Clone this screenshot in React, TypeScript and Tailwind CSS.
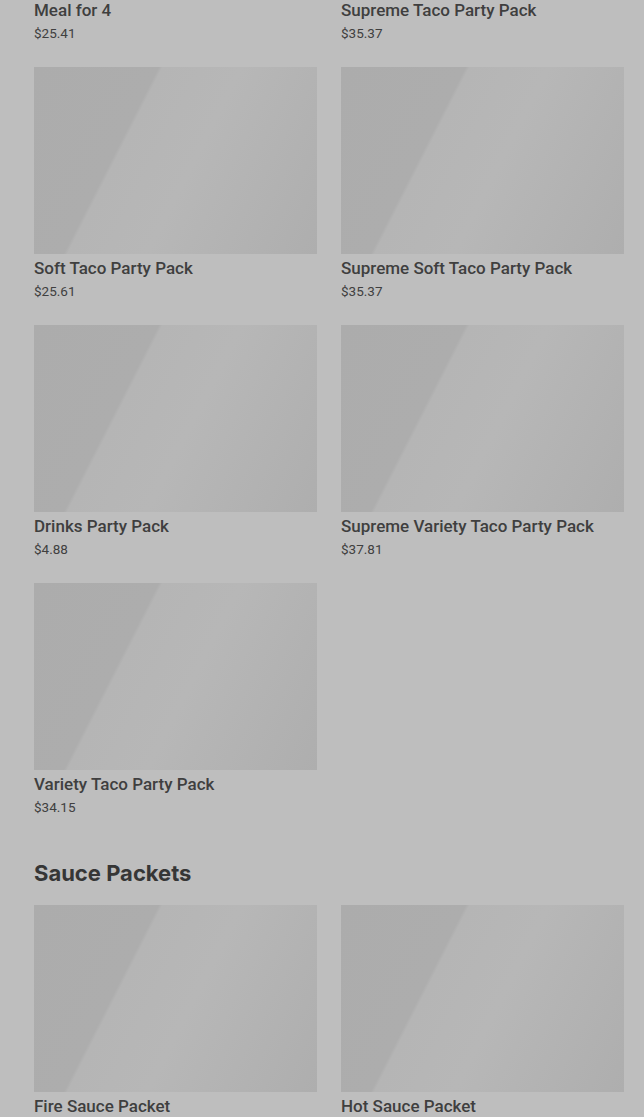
import React from 'react';

type Item = { name: string; price: string };

const partyPacks: Item[] = [
  { name: 'Meal for 4', price: '$25.41' },
  { name: 'Supreme Taco Party Pack', price: '$35.37' },
  { name: 'Soft Taco Party Pack', price: '$25.61' },
  { name: 'Supreme Soft Taco Party Pack', price: '$35.37' },
  { name: 'Drinks Party Pack', price: '$4.88' },
  { name: 'Supreme Variety Taco Party Pack', price: '$37.81' },
  { name: 'Variety Taco Party Pack', price: '$34.15' },
];

const saucePackets: Item[] = [
  { name: 'Fire Sauce Packet', price: '$0.00' },
  { name: 'Hot Sauce Packet', price: '$0.00' },
];

const ProductCard = ({ item }: { item: Item }) => (
  <div className="flex flex-col">
    <div className="h-[187px] w-full bg-[linear-gradient(117deg,#acacac_0%,#adadad_33%,#b5b5b5_34%,#b7b7b7_55%,#b3b3b3_75%,#aeaeae_100%)]" />
    <div className="h-[26px] pt-[2px] text-[17px] font-medium leading-[24px] text-[#3f3f3f] font-['Roboto',sans-serif]">
      {item.name}
    </div>
    <div className="h-[21px] pt-[1px] text-[13.5px] leading-[20px] text-[#404040] font-['Roboto',sans-serif]">
      {item.price}
    </div>
  </div>
);

export default function App() {
  return (
    <div className="min-h-[1117px] w-[644px] overflow-hidden bg-[#bebebe]">
      <div className="-mt-[191px] pl-[34px] pr-[20px]">
        <div className="grid grid-cols-2 gap-x-[24px] gap-y-[24px]">
          {partyPacks.map((item) => (
            <ProductCard key={item.name} item={item} />
          ))}
        </div>
        <h2 className="mt-[40px] mb-[16px] h-[32px] text-[22px] font-bold leading-[32px] text-[#363636] font-['Inter',sans-serif]">
          Sauce Packets
        </h2>
        <div className="grid grid-cols-2 gap-x-[24px] gap-y-[24px]">
          {saucePackets.map((item) => (
            <ProductCard key={item.name} item={item} />
          ))}
        </div>
      </div>
    </div>
  );
}
